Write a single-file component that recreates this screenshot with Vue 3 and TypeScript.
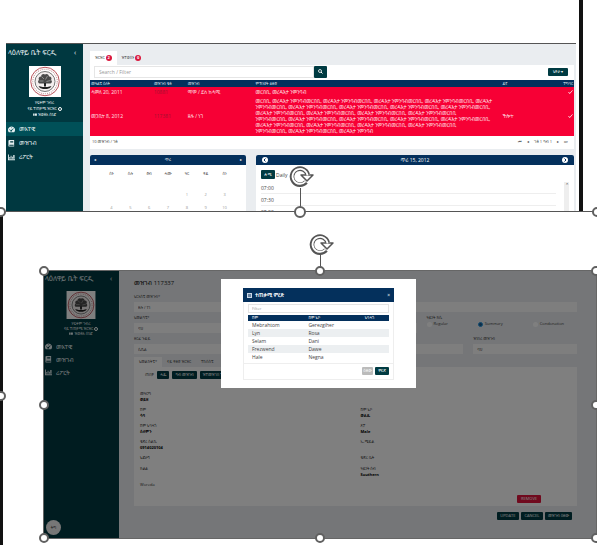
<script setup lang="ts">
import { ref } from 'vue'

interface Shot {
  id: string
  kind: 'dashboard' | 'record'
}
interface CaseRow {
  date: string
  file: string
  party: string
  lines: string[]
  room: string
}
interface Field {
  label: string
  value: string
}

const shots: Shot[] = [
  { id: 'top', kind: 'dashboard' },
  { id: 'bottom', kind: 'record' },
]

const nav = [
  { icon: 'gauge', label: 'መእተዊ' },
  { icon: 'book', label: 'መዝገብ' },
  { icon: 'chart', label: 'ሪፖርት' },
]

const cases: CaseRow[] = [
  { date: 'ሓምለ 20, 2011', file: '10881', party: 'ማሞ / ደስ ከሓሚ', lines: ['መርበቢ, መረዳእታ ንምንባብ'], room: '' },
  {
    date: 'መጋቢት 8, 2012',
    file: '117381',
    party: 'ዘሉ / ነገ',
    lines: [
      'መርበቢ, መረዳእታ ንምንባብመርበቢ, መረዳእታ ንምንባብመርበቢ, መረዳእታ ንምንባብመርበቢ, መረዳእታ ንምንባብመርበቢ, መረዳእታ',
      'ንምንባብመርበቢ, መረዳእታ ንምንባብመርበቢ, መረዳእታ ንምንባብመርበቢ, መረዳእታ ንምንባብመርበቢ, መረዳእታ ንምንባብመርበቢ,',
      'መረዳእታ ንምንባብመርበቢ, መረዳእታ ንምንባብመርበቢ, መረዳእታ ንምንባብመርበቢ, መረዳእታ ንምንባብመርበቢ',
      'ንምንባብመርበቢ, መረዳእታ ንምንባብመርበቢ, መረዳእታ ንምንባብመርበቢ, መረዳእታ ንምንባብመርበቢ, መረዳእታ ንምንባብመርበቢ,',
      'መረዳእታ ንምንባብመርበቢ, መረዳእታ ንምንባብመርበቢ, መረዳእታ ንምንባብመርበቢ, መረዳእታ ንምንባብመርበቢ',
      'ንምንባብመርበቢ, መረዳእታ ንምንባብመርበቢ, መረዳእታ ንምንባብ',
    ],
    room: 'ችሎት',
  },
]

const weekdays = ['ሰኑ', 'ሰሉ', 'ሮብ', 'ሓሙ', 'ዓር', 'ቀዳ', 'ሰን']
const weeks = [
  ['', '', '', '', '1', '2', '3'],
  ['4', '5', '6', '7', '8', '9', '10'],
]
const slots = ['07:00', '07:30', '08:00']

const kinds = ['Regular', 'Summary', 'Condonation']
const kind = ref('Summary')

const leftFields: Field[] = [
  { label: 'መዓርግ', value: 'ወይዘ' },
  { label: 'ሽም', value: 'ሳባ' },
  { label: 'ሽም ኣባሓጎ', value: 'ሰለሞን' },
  { label: 'ቁጽሪ ስልኪ', value: '0914020104' },
]
const rightFields: Field[] = [
  { label: 'ሽም ኣቦ', value: 'ወልዱ' },
  { label: 'ጾታ', value: 'Male' },
  { label: 'ኢ-ሜይል', value: '' },
]

const people = [
  ['Mebrahtom', 'Gerezgiher'],
  ['Lyn', 'Rosa'],
  ['Selam', 'Dani'],
  ['Frezwend', 'Dawe'],
  ['Hale', 'Negna'],
]
</script>

<template>
  <div class="canvas">
    <span class="page-edge upper"></span>
    <span class="page-edge lower"></span>

    <section v-for="shot in shots" :key="shot.id" class="shot" :class="shot.id">
      <aside class="side">
        <header class="brand">
          <span>ላዕለዋይ ቤት ፍርዲ</span>
          <span class="chev">‹</span>
        </header>
        <svg class="logo" viewBox="0 0 64 62">
          <rect width="64" height="62" fill="#fff" />
          <circle cx="32" cy="31" r="28.5" fill="none" stroke="#b9545c" stroke-width="2" />
          <circle cx="32" cy="31" r="24.5" fill="none" stroke="#c9a3a5" stroke-width="2.4" stroke-dasharray="2 2" />
          <circle cx="32" cy="31" r="20" fill="#f3eeee" stroke="#555" stroke-width="1.6" />
          <path d="M32 17c4-3 8 1 8 4 5 0 6 4 4 7 4 3 1 8-4 7H24c-5 1-8-4-4-7-2-3 0-7 4-7 0-3 4-7 8-4z" fill="#4a4a4a" />
          <path d="M25 21l5 5M37 20l-4 7M21 30h8M35 31l8-2" stroke="#ccc" stroke-width="1" />
          <path d="M30 34h4v7h-4zM19 40l8 2h10l8-2-3 4-6 2h-8l-6-2z" fill="#222" />
        </svg>
        <div class="who">
          <span>ሃፍቶም ገብረ</span>
          <span>ናይ ተጠቃሚ ዝርዝር <i class="cog"></i></span>
          <span><svg class="tiny" viewBox="0 0 10 8"><path d="M0 1h4v6H0zM5 1h5v6H5z" fill="currentColor" /></svg> ዝወፅእ ሰነድ</span>
        </div>
        <nav>
          <a v-for="(item, i) in nav" :key="item.icon" href="#" :class="{ active: i === 0 }">
            <svg viewBox="0 0 16 16">
              <path v-if="item.icon === 'gauge'" fill-rule="evenodd" fill="currentColor" d="M8 1a8 8 0 0 1 7 12l-1 1H2l-1-1A8 8 0 0 1 8 1zM8 3a1 1 0 1 0 0 2 1 1 0 0 0 0-2zM3.500 7.500a1 1 0 1 0 0 2 1 1 0 0 0 0-2zM12 5L8 9a2 2 0 1 0 1 1l4-4z" />
              <path v-else-if="item.icon === 'book'" fill-rule="evenodd" fill="currentColor" d="M3 0h11v15H3a2 2 0 0 1-2-2V2a2 2 0 0 1 2-2zM5 3v2h7V3zM5 6v1h7V6zM3 11v2h10v-2z" />
              <path v-else fill="currentColor" d="M0 1h2v11h14v2H0zM3 7h2v4H3zM6 4h2v7H6zM9 6h2v5H9zM12 2h3v9h-3z" />
            </svg>
            <span>{{ item.label }}</span>
          </a>
        </nav>
        <span v-if="shot.kind === 'record'" class="lang">ትግ</span>
      </aside>

      <main v-if="shot.kind === 'dashboard'" class="dash">
        <div class="tabs">
          <button type="button" class="on">ዝርዝር <b>2</b></button>
          <button type="button">ዝተወሰኑ <b>0</b></button>
        </div>
        <div class="card">
          <div class="search">
            <input type="text" placeholder="Search / Filter" aria-label="Search" />
            <button type="button" class="btn" aria-label="Search">
              <svg viewBox="0 0 10 10"><circle cx="4" cy="4" r="3" fill="none" stroke="#fff" stroke-width="1.600" /><path d="M6 6l3 3" stroke="#fff" stroke-width="2" /></svg>
            </button>
            <button type="button" class="btn menu">ኣቀራ ▾</button>
          </div>
          <table class="cases">
            <colgroup><col class="c1" /><col class="c2" /><col class="c3" /><col class="c4" /><col class="c5" /><col class="c6" /></colgroup>
            <thead>
              <tr><th>መዓልቲ ዕለት</th><th>መዝገብ ቁፅ</th><th>መዝገብ</th><th>ምኽንያት ቆፀሮ</th><th>ዳኛ</th><th>ተግባር</th></tr>
            </thead>
            <tbody>
              <tr v-for="row in cases" :key="row.file">
                <td>{{ row.date }}</td>
                <td><a href="#">{{ row.file }}</a></td>
                <td>{{ row.party }}</td>
                <td><span v-for="(line, i) in row.lines" :key="i" class="line">{{ line }}</span></td>
                <td>{{ row.room }}</td>
                <td class="end"><svg viewBox="0 0 12 10"><path d="M1 5l3 4 7-8" fill="none" stroke="#fff" stroke-width="2" /></svg></td>
              </tr>
            </tbody>
          </table>
          <footer class="pager">
            <span>10 መዝገብ / ገፅ</span>
            <span class="pages"><i>⏮</i><i>◂</i><span>ገፅ 1 ካብ 1</span><i>▸</i><i>⏭</i></span>
          </footer>
        </div>
        <div class="panels">
          <section class="panel month">
            <header><span>◂</span><span>ጥሪ</span><span>▸</span></header>
            <div class="grid">
              <span v-for="d in weekdays" :key="d" class="wd">{{ d }}</span>
              <template v-for="(week, w) in weeks" :key="w">
                <span v-for="(n, i) in week" :key="w + '-' + i">{{ n }}</span>
              </template>
            </div>
          </section>
          <section class="panel day">
            <header>
              <svg viewBox="0 0 12 12"><circle cx="6" cy="6" r="6" fill="#fff" /><path d="M7 3L4 6l3 3" fill="none" stroke="#04305c" stroke-width="2" /></svg>
              <span>ጥሪ 15, 2012</span>
              <svg viewBox="0 0 12 12"><circle cx="6" cy="6" r="6" fill="#fff" /><path d="M5 3l3 3-3 3" fill="none" stroke="#04305c" stroke-width="2" /></svg>
            </header>
            <div class="mode"><button type="button" class="btn">ሎሚ</button><span>Daily</span></div>
            <div class="scroll">
              <ul><li v-for="s in slots" :key="s">{{ s }}</li></ul>
              <span class="track">⌃</span>
            </div>
          </section>
        </div>
      </main>

      <main v-else class="record">
        <h1>መዝገብ 117337</h1>
        <div class="row">
          <label class="f wide">ኣርእስቲ መዝገብ*<input type="text" value="ዘሉ / ነገ" /></label>
        </div>
        <div class="row">
          <label class="f two">ኣመልካቲ*<input type="text" value="ባህ" /></label>
          <fieldset>
            <legend>ዓይነት ክሲ</legend>
            <label v-for="k in kinds" :key="k"><input v-model="kind" type="radio" name="kind" :value="k" />{{ k }}</label>
          </fieldset>
        </div>
        <div class="row">
          <label class="f three">ዘርፊ ጉዳይ<input type="text" value="ሲቪል" /></label>
          <label class="f one">ዝነበረ መዝገብ<input type="text" value="ባህ" /></label>
        </div>
        <div class="rtabs">
          <button type="button" class="on">ኣመልከትቲ*</button><button type="button">ናይ ቀፀሮ ዝርዝር</button><button type="button">ተከሰስቲ</button>
        </div>
        <div class="sheet">
          <div class="tools">
            <span>ጠበቓ</span>
            <button type="button" class="btn">ሓዱ</button>
            <button type="button" class="btn">ካብ መዝገብ</button>
            <button type="button" class="btn">ዝተመዝገበ ተጠቃሚ</button>
          </div>
          <div class="cols">
            <dl>
              <div v-for="f in leftFields" :key="f.label"><dt>{{ f.label }}</dt><dd>{{ f.value }}</dd></div>
              <div class="short"><dt>ኣድራሻ</dt></div>
              <div><dt>ክልል</dt></div>
              <div><dt>Woreda</dt></div>
            </dl>
            <dl class="second">
              <div v-for="f in rightFields" :key="f.label"><dt>{{ f.label }}</dt><dd>{{ f.value }}</dd></div>
              <div class="short"><dt>ቁጽሪ ቤት</dt></div>
              <div><dt>ዓይነት ሰብ</dt><dd>Southern</dd></div>
            </dl>
          </div>
          <div class="remove"><button type="button" class="btn red">REMOVE</button></div>
        </div>
        <footer class="acts">
          <button type="button" class="btn">UPDATE</button>
          <button type="button" class="btn">CANCEL</button>
          <button type="button" class="btn">መዝገብ ዕፀው</button>
        </footer>
      </main>

      <div v-if="shot.kind === 'record'" class="veil">
        <div class="frame">
          <div class="dialog" role="dialog" aria-label="ተጠቃሚ ምረጽ">
            <header>
              <svg viewBox="0 0 10 10"><path d="M0 0h10v10H0zM2 3v1h6V3zM2 5v1h6V5zM2 7v1h6V7z" fill="#c9d6e6" fill-rule="evenodd" /></svg>
              <strong>ተጠቃሚ ምረጽ</strong>
              <button type="button" aria-label="Close">×</button>
            </header>
            <div class="body">
              <input type="text" placeholder="Filter" aria-label="Filter" />
              <table>
                <colgroup><col class="p1" /><col class="p2" /><col /></colgroup>
                <thead><tr><th>ሽም</th><th>ሽም ኣቦ</th><th>ኣባሓጎ</th></tr></thead>
                <tbody>
                  <tr v-for="p in people" :key="p[0]"><td>{{ p[0] }}</td><td>{{ p[1] }}</td><td></td></tr>
                </tbody>
              </table>
            </div>
            <footer>
              <button type="button" class="btn grey">ዕፀው</button>
              <button type="button" class="btn">ምረጽ</button>
            </footer>
          </div>
        </div>
      </div>
    </section>

    <div class="selection first">
      <i class="stem"></i>
      <i class="h tl"></i><i class="h tc"></i><i class="h tr"></i><i class="h ml"></i>
      <svg class="rotate" viewBox="0 0 26 22"><use href="#rot" /></svg>
    </div>
    <div class="selection second">
      <i class="stem"></i>
      <i class="h tl"></i><i class="h tc"></i><i class="h tr"></i>
      <i class="h ml"></i><i class="h mr"></i>
      <i class="h bl"></i><i class="h bc"></i><i class="h br"></i>
      <svg class="rotate" viewBox="0 0 26 22">
        <g id="rot" fill="none" stroke-linejoin="round">
          <path d="M17 16A8 8 0 1 1 18.700 8.500" stroke="#555" stroke-width="4.600" />
          <path d="M12 9h12l-6 6z" fill="#fff" stroke="#555" stroke-width="1.500" />
          <path d="M16.500 15.500A7.500 7.500 0 1 1 18.500 9.500" stroke="#fff" stroke-width="1.800" />
        </g>
      </svg>
    </div>
  </div>
</template>

<style>
body {
  background: #fff;
}
</style>

<style scoped>
* {
  box-sizing: border-box;
}
.canvas {
  position: relative;
  height: 545px;
  overflow: hidden;
  font-family: 'Open Sans', 'Noto Sans', 'Noto Sans Ethiopic', sans-serif;
  font-size: 4px;
  line-height: 6px;
  color: #444;
}
button, input {
  font: inherit;
  color: inherit;
  margin: 0;
  padding: 0;
  border: 0;
  background: none;
}
input {
  min-width: 0;
}
table {
  width: 100%;
  border-collapse: collapse;
  table-layout: fixed;
}
th, td {
  padding: 0 1px;
  font-weight: 400;
  text-align: left;
  white-space: nowrap;
}
a {
  color: inherit;
  text-decoration: none;
}
i {
  font-style: normal;
}
.btn {
  background: #003b42;
  color: #fff;
  border-radius: 1px;
  white-space: nowrap;
  overflow: hidden;
}

/* page borders behind the pictures */
.page-edge {
  position: absolute;
  background: #111;
}
.page-edge.upper {
  top: 0;
  right: 14px;
  width: 4px;
  height: 211px;
}
.page-edge.lower {
  top: 212px;
  left: 0;
  width: 3px;
  bottom: 0;
}

/* pasted windows */
.shot {
  position: absolute;
  display: flex;
  overflow: hidden;
  background: #eaedf0;
}
.shot.top {
  left: 6px;
  right: 21px;
  top: 43px;
  height: 168px;
  border-top: 1px solid #555;
}
.shot.bottom {
  left: 43px;
  right: 1px;
  top: 270px;
  height: 269px;
}

/* sidebar */
.side {
  flex: 0 0 77px;
  display: flex;
  flex-direction: column;
  background: #003840;
  color: #e4eef0;
}
.brand {
  display: flex;
  justify-content: space-between;
  padding: 4px 7px 4px 2px;
  font-size: 7px;
  line-height: 10px;
  white-space: nowrap;
  margin-bottom: 4px;
}
.logo {
  width: 32px;
  height: 31px;
  align-self: center;
}
.who {
  display: flex;
  flex-direction: column;
  align-items: center;
  padding: 3px 0 4px;
  white-space: nowrap;
}
.tiny {
  width: 4px;
  height: 3px;
}
.cog {
  display: inline-block;
  width: 4px;
  height: 4px;
  border: 1px solid #fff;
  border-radius: 50%;
  vertical-align: middle;
}
nav a {
  display: flex;
  align-items: center;
  gap: 4px;
  height: 14px;
  padding-left: 2px;
  font-size: 6px;
}
nav svg {
  width: 7px;
  height: 7px;
}
.top nav .active {
  background: #005058;
}
.bottom .side {
  flex-basis: 76px;
}
.bottom .brand {
  margin-bottom: 3px;
}
.bottom .logo {
  width: 30px;
  height: 28px;
}
.bottom .who {
  padding: 2px 0 3px;
  line-height: 5px;
}
.bottom nav {
  padding-top: 1px;
}
.bottom nav a {
  height: 13px;
}
.lang {
  margin: auto 0 4px 3px;
  width: 15px;
  height: 15px;
  border-radius: 50%;
  background: #eee;
  color: #333;
  text-align: center;
  line-height: 15px;
}

/* dashboard */
.dash {
  flex: 1;
  min-width: 0;
  padding: 7px 2px 0 7px;
  display: flex;
  flex-direction: column;
}
.tabs {
  display: flex;
}
.tabs button {
  height: 14px;
  padding: 0 5px;
}
.tabs .on {
  background: #fff;
}
.tabs b {
  display: inline-block;
  width: 6px;
  border-radius: 3px;
  background: #d9163c;
  color: #fff;
  text-align: center;
}
.card {
  background: #fff;
}
.search {
  display: flex;
  align-items: center;
  padding: 1px 6px 2px 4px;
}
.search input {
  flex: 0 1 220px;
  height: 12px;
  padding-left: 4px;
  border: 1px solid #e6e6e6;
  font-size: 5px;
}
input::placeholder {
  color: #999;
}
.search .btn {
  width: 13px;
  height: 12px;
  line-height: 6px;
}
.search svg {
  width: 5px;
  height: 5px;
}
.search .menu {
  margin-left: auto;
  width: 20px;
  height: 8px;
}
.cases thead {
  background: #04305c;
  color: #dde6f0;
}
.cases th {
  height: 7px;
}
.cases tbody {
  background: #f70035;
  color: #ffe0e6;
  font-size: 5px;
}
.cases tr:first-child td {
  height: 9px;
}
.cases tbody tr:last-child td {
  height: 40px;
}
.cases a {
  color: #a3102f;
}
.cases .end, .cases th:last-child {
  text-align: right;
}
.cases .end svg {
  width: 5px;
  height: 4px;
}
.line {
  display: block;
}
.c1 { width: 13%; }
.c2 { width: 7%; }
.c3 { width: 14%; }
.c4 { width: 51%; }
.c5 { width: 10%; }
.c6 { width: 5%; }
.pager {
  display: flex;
  justify-content: space-between;
  padding: 3px 6px 4px 2px;
}
.pages {
  display: flex;
  gap: 5px;
}
.panels {
  flex: 1;
  display: flex;
  gap: 10px;
  padding-top: 6px;
}
.panel {
  background: #fff;
  border-radius: 2px 2px 0 0;
}
.panel header {
  display: flex;
  justify-content: space-between;
  align-items: center;
  height: 10px;
  padding: 0 4px;
  border-radius: 2px 2px 0 0;
  background: #04305c;
  color: #fff;
}
.month {
  flex: 156;
}
.day {
  flex: 318;
  font-size: 5px;
}
.day header {
  padding: 0 6px;
}
.day header svg {
  width: 6px;
  height: 6px;
}
.grid {
  display: grid;
  grid-template-columns: repeat(7, 1fr);
  grid-template-rows: 18px 15px 13px;
  align-items: end;
  padding: 0 12px;
  text-align: center;
  color: #999;
}
.grid .wd {
  align-self: center;
  color: #444;
}
.mode {
  display: flex;
  align-items: center;
  padding: 5px 5px 3px;
  gap: 1px;
}
.mode .btn {
  width: 14px;
  height: 9px;
  font-size: 4px;
}
.scroll {
  display: flex;
  padding: 0 5px;
}
.scroll ul {
  flex: 1;
  margin: 0 8px 0 0;
  padding: 0;
  list-style: none;
}
.scroll li {
  height: 12px;
  line-height: 12px;
  border-bottom: 1px solid #eee;
}
.track {
  width: 5px;
  background: #eee;
  text-align: center;
}

/* record form */
.record {
  flex: 1;
  min-width: 0;
  padding: 8px 19px 0 15px;
  display: flex;
  flex-direction: column;
}
h1 {
  margin: 0 0 6px;
  font-size: 6px;
  line-height: 10px;
  font-weight: 500;
  color: #222;
}
.row {
  display: flex;
  flex-shrink: 0;
  gap: 10px;
  height: 21px;
}
.f {
  display: flex;
  flex-direction: column;
  gap: 2px;
}
.f input {
  width: 100%;
  height: 10px;
  padding-left: 4px;
  background: #fdfdfd;
}
.wide { flex: 1; }
.two { flex: 292; }
.three { flex: 330; }
.one { flex: 104; }
fieldset {
  flex: 142;
  display: flex;
  justify-content: space-between;
  margin: 0;
  padding: 0 13px 0 0;
  border: 0;
  min-width: 0;
}
legend {
  padding: 0;
}
fieldset label {
  display: flex;
  align-items: center;
  gap: 2px;
  height: 6px;
}
fieldset input {
  appearance: none;
  width: 5px;
  height: 5px;
  border-radius: 50%;
  background: #fff;
}
fieldset input:checked {
  border: 1px solid #2196e0;
  background: #1c5c90;
}
.rtabs {
  display: flex;
  flex-shrink: 0;
}
.rtabs button {
  height: 10px;
  padding: 0 5px;
}
.rtabs .on {
  background: #fff;
}
.sheet {
  flex: 1;
  display: flex;
  flex-direction: column;
  background: #fff;
  padding: 4px 6px 3px;
}
.tools {
  display: flex;
  gap: 3px;
  align-items: center;
  padding-left: 5px;
}
.tools .btn {
  height: 8px;
  padding: 0 3px;
}
.cols {
  flex: 1;
  display: grid;
  grid-template-columns: 1fr 1fr;
  padding-top: 12px;
  color: #333;
}
dl {
  margin: 0;
}
dl div {
  min-height: 16px;
}
dl .short {
  min-height: 11px;
}
dl div:last-child {
  min-height: 6px;
}
.second {
  padding: 16px 0 0 5px;
}
dd {
  margin: 0;
  min-height: 6px;
  font-weight: 700;
  color: #000;
}
.remove {
  display: flex;
  justify-content: flex-end;
  padding-right: 30px;
}
.btn.red {
  width: 24px;
  height: 8px;
  background: #e0143c;
}
.acts {
  display: flex;
  justify-content: flex-end;
  gap: 2px;
  padding: 6px 5px 19px;
}
.acts .btn {
  min-width: 22px;
  height: 8px;
  padding: 0 3px;
}

/* dialog above the record */
.veil {
  position: absolute;
  inset: 0;
  display: flex;
  justify-content: center;
  align-items: flex-start;
  padding: 9px 2px 0 0;
  background: rgba(0, 0, 0, 0.5);
}
.frame {
  padding: 9px 22px 8px;
  background: #fff;
}
.dialog {
  width: 151px;
  border: 1px solid #eee;
  border-top: 0;
}
.dialog header {
  display: flex;
  align-items: center;
  gap: 3px;
  height: 14px;
  padding: 0 4px;
  margin: 0 -1px;
  background: #04305c;
  color: #fff;
  font-size: 5px;
}
.dialog header svg {
  width: 5px;
  height: 5px;
}
.dialog header button {
  margin-left: auto;
}
.body {
  padding: 2px 4px;
  border-bottom: 1px solid #eee;
}
.body input {
  width: 100%;
  height: 9px;
  margin-bottom: 2px;
  padding-left: 3px;
  border: 1px solid #e4e4e4;
  display: block;
}
.body thead {
  background: #04305c;
  color: #fff;
}
.p1, .p2 {
  width: 40%;
}
.body th, .body td {
  padding: 0 0 0 4px;
}
.body td {
  height: 8px;
  font-size: 5px;
}
.body tbody tr:nth-child(even) {
  background: #eceff1;
}
.dialog footer {
  display: flex;
  justify-content: flex-end;
  gap: 2px;
  padding: 3px 4px 4px;
}
.dialog footer .btn {
  min-width: 14px;
  height: 8px;
}
.dialog footer .grey {
  min-width: 11px;
  background: #bbb;
}

/* selection outlines and handles */
.selection {
  position: absolute;
  border-top: 1px solid #555;
}
.selection.first {
  left: 3px;
  right: 0;
  top: 211px;
  height: 368px;
}
.selection.first::before {
  content: '';
  position: absolute;
  top: -1px;
  left: -3px;
  width: 3px;
  height: 1px;
  background: #555;
}
.first .tl, .first .ml {
  left: -2px;
}
.selection.second {
  left: 43px;
  right: 0;
  top: 270px;
  height: 269px;
  border: 1px solid #666;
}
.h {
  position: absolute;
  width: 10px;
  height: 10px;
  margin: -5px;
  border: 2px solid #606060;
  border-radius: 50%;
  background: #fff;
}
.tl, .tc, .tr { top: 0; }
.ml, .mr { top: 50%; }
.bl, .bc, .br { top: 100%; }
.tl, .ml, .bl { left: 0; }
.tc, .bc { left: 50%; }
.tr, .mr, .br { left: 100%; }
.first .tc {
  width: 12px;
  height: 12px;
  margin: -6px;
}
.stem {
  position: absolute;
  left: 50%;
  top: -24px;
  width: 1px;
  height: 24px;
  background: #555;
}
.second .stem {
  top: -18px;
  height: 18px;
}
.rotate {
  position: absolute;
  left: 50%;
  top: -37px;
  width: 26px;
  height: 22px;
  margin-left: -11px;
}
.first .rotate {
  top: -46px;
}
</style>
